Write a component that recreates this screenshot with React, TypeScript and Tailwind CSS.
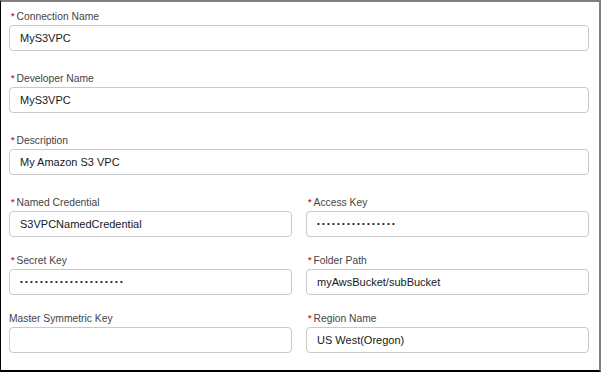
const font = { fontFamily: '"Liberation Sans", Arial, sans-serif' }

type FieldProps = { label: string; value?: string; required?: boolean; dots?: number }

function Field({ label, value = '', required, dots }: FieldProps) {
  return (
    <div className="flex flex-col">
      <label className="flex items-center h-[14px] text-[10.3px] leading-[14px] text-[#444]">
        {required && <span className="text-[#c23934] text-[9px] font-bold mr-[2px] ml-[2px] -mt-[3px]">*</span>}
        {label}
      </label>
      <div className="mt-[1px] h-[26px] rounded-[4px] border border-[#c9c9c9] bg-white flex items-center pl-[10px] text-[11px] text-[#181818]">
        {dots ? (
          <span className="text-[8px] tracking-[2.2px] text-[#222]">{'•'.repeat(dots)}</span>
        ) : (
          value
        )}
      </div>
    </div>
  )
}

export default function App() {
  return (
    <div style={font} className="w-[601px] h-[372px] bg-white border-t-2 border-r-2 border-t-[#808080] border-r-[#808080] border-l border-l-black border-b-2 border-b-black pt-[8px] pl-[8px] pr-[10px]">
      <div className="flex flex-col">
        <Field label="Connection Name" value="MyS3VPC" required />
        <div className="mt-[21px]">
          <Field label="Developer Name" value="MyS3VPC" required />
        </div>
        <div className="mt-[21px]">
          <Field label="Description" value="My Amazon S3 VPC" required />
        </div>
        <div className="mt-[21px] grid grid-cols-2 gap-x-[14px]">
          <Field label="Named Credential" value="S3VPCNamedCredential" required />
          <Field label="Access Key" dots={16} required />
        </div>
        <div className="mt-[17px] grid grid-cols-2 gap-x-[14px]">
          <Field label="Secret Key" dots={21} required />
          <Field label="Folder Path" value="myAwsBucket/subBucket" required />
        </div>
        <div className="mt-[17px] grid grid-cols-2 gap-x-[14px]">
          <Field label="Master Symmetric Key" />
          <Field label="Region Name" value="US West(Oregon)" required />
        </div>
      </div>
    </div>
  )
}
